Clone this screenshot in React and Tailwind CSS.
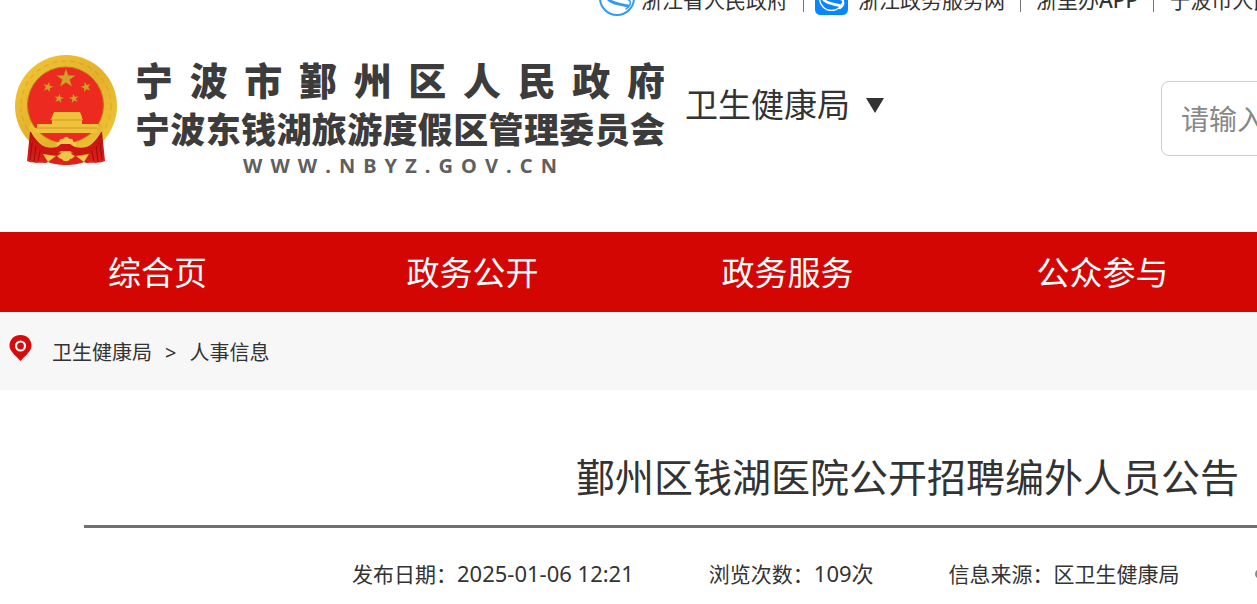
const navItems = ["综合页", "政务公开", "政务服务", "公众参与"];

const meta = [
    { label: "发布日期：", value: "2025-01-06 12:21", numeric: true },
    { label: "浏览次数：", value: "109次", numeric: true },
    { label: "信息来源：", value: "区卫生健康局" },
];

const star = "M0,-10 L2.3,-3.2 L9.5,-3.1 L3.8,1.2 L5.9,8.1 L0,4 L-5.9,8.1 L-3.8,1.2 L-9.5,-3.1 L-2.3,-3.2 Z";

function Emblem() {
    return (
        <svg viewBox="0 0 104 112" className="h-28 w-[104px] shrink-0" aria-label="国徽" role="img">
            <defs>
                <linearGradient id="gold" x1="0" y1="0" x2="1" y2="1">
                    <stop offset="0" stopColor="#f3c838" />
                    <stop offset="0.5" stopColor="#e3b02a" />
                    <stop offset="1" stopColor="#f3cb38" />
                </linearGradient>
                <linearGradient id="drape" x1="0" y1="0" x2="0" y2="1">
                    <stop offset="0" stopColor="#b80f0d" />
                    <stop offset="1" stopColor="#e3231c" />
                </linearGradient>
            </defs>
            {/* ring and red field */}
            <circle cx="52" cy="51" r="51" fill="url(#gold)" />
            <circle cx="52" cy="51" r="45" fill="none" stroke="#cf981c" strokeWidth="1.500" strokeDasharray="5 4" opacity="0.4" />
            {/* drapes */}
            <path d="M16 77L13 106c4 2 7 1 9 2 6-1 9 1 12-1 5 2 10 3 18 3s13-1 18-3c3 2 6 0 12 1 2-1 5 0 9-2L88 77z" fill="url(#drape)" />
            <path d="M18 88l-2 17M22 90l-2 17M27 93l-3 13M86 88l2 17M82 90l2 17M77 93l3 13" stroke="#9c0b0a" strokeWidth="1" fill="none" />
            <path d="M15 72c5 16 20 26 37 26s32-10 37-26l-6-8H21z" fill="url(#gold)" />
            <circle cx="51.500" cy="50" r="38" fill="#ec2a20" stroke="#b9791b" strokeWidth="1" />
            <g fill="#d5a027" stroke="#a8660f" strokeWidth="0.400">
                <path d={star} transform="translate(52 23.500)" />
                <path d={star} transform="translate(34 32) rotate(15) scale(0.550)" />
                <path d={star} transform="translate(72 32) rotate(-15) scale(0.550)" />
                <path d={star} transform="translate(45 43.500) rotate(10) scale(0.500)" />
                <path d={star} transform="translate(60 43.500) rotate(-10) scale(0.500)" />
            </g>
            {/* gate tower */}
            <g fill="#f0c23c">
                <path d="M40 57h26l2 5H38z" />
                <path d="M39 61h28l2 4H36zM38 65h30v5H38z" />
                <path d="M23 69h61v4h-1v5H21v-5h2z" />
            </g>
            <path d="M37 65h32M22 73h61" stroke="#c98d1c" strokeWidth="0.800" />
            {/* knot */}
            <path d="M43 91c-1-3 0-4 2-4 0-3 3-4 4-3 2-3 5-3 6 0 2-1 5 0 4 3 3 0 4 2 2 4l-4 3H48z" fill="#f2cb4a" />
            <path d="M17 82c8 10 17 12 26 10l4-3h9l5 3c9 2 18 0 26-10-4 13-14 18-24 18l-7-4h-9l-7 4c-10 0-19-5-23-18z" fill="#d01612" />
            <path d="M29 99l13 2-8 6zM75 99l-13 2 8 6z" fill="#eec848" />
            <path d="M43 101c3-1 4-4 7-4h4c3 0 4 3 7 4-2 2-3 3-5 3-1 3-7 3-8 0-2 0-3-1-5-3z" fill="#edc548" />
        </svg>
    );
}

function GovMark({ className, bg, fg }) {
    return (
        <svg viewBox="0 0 36 36" className={className} aria-hidden="true">
            {bg && <rect width="36" height="36" rx="6" fill={bg} />}
            <g fill="none" stroke={fg} strokeLinecap="round">
                <circle cx="18" cy="18" r={bg ? 13 : 17} strokeWidth={bg ? 1.5 : 2} />
                <path d="M8 17c2 6 12 7 21 9" strokeWidth="3" />
                <path d="M9 13c7 5 17 3 22 8 1 3-1 6-4 8" strokeWidth="1.500" />
            </g>
        </svg>
    );
}

function TopLinks() {
    return (
        <div className="flex h-4 items-end overflow-hidden pl-[599px] text-[21px] leading-8">
            <div className="flex shrink-0 items-end">
                <a href="#" className="flex items-end gap-[6px]">
                    <GovMark className="size-9" fg="#2f9bf5" />
                    浙江省人民政府
                </a>
                <span className="mb-1 ml-[15px] mr-[11px] h-6 w-px bg-neutral-500" />
                <a href="#" className="flex items-end gap-[10px]">
                    <GovMark className="mb-px size-[33px]" bg="#0a86fb" fg="#ffffff" />
                    浙江政务服务网
                </a>
                <span className="mx-[15px] mb-1 h-6 w-px bg-neutral-500" />
                <a href="#">
                    浙里办<span className="font-medium">APP</span>
                </a>
                <span className="mx-[15px] mb-1 h-6 w-px bg-neutral-500" />
                <a href="#">宁波市人民政府</a>
            </div>
        </div>
    );
}

function Header() {
    return (
        <header className="flex items-start pb-[54px] pl-[14px] pt-[39px]">
            <Emblem />
            <a href="#" className="ml-[17px] block w-[530px] shrink-0 text-[#3c3c3c]">
                <span className="block text-[38px] font-black leading-[50px] [text-align-last:justify]">
                    宁波市鄞州区人民政府
                </span>
                <span className="block text-[35px] font-black leading-[49px] [text-align-last:justify]">
                    宁波东钱湖旅游度假区管理委员会
                </span>
                <span className="mx-auto flex w-[314px] justify-between text-xl font-bold leading-6 text-[#606060]">
                    {[..."WWW.NBYZ.GOV.CN"].map((letter, i) => (
                        <span key={i}>{letter}</span>
                    ))}
                </span>
            </a>
            <button type="button" className="ml-5 mt-6 flex shrink-0 items-center gap-4 text-[33px] leading-[52px]">
                卫生健康局
                <svg viewBox="0 0 18 15" className="h-[15px] w-[18px]" aria-hidden="true">
                    <path d="M0 0h18L9 15z" fill="#333" />
                </svg>
            </button>
            <input
                type="text"
                aria-label="搜索"
                placeholder="请输入关键字"
                className="ml-[277px] mt-[26px] h-[75px] w-[420px] shrink-0 rounded-lg border border-[#ccc] px-[19px] text-[28px] placeholder:text-[#888]"
            />
        </header>
    );
}

export default function App() {
    return (
        <div className="min-h-screen overflow-hidden whitespace-nowrap bg-white font-['Noto_Sans','Noto_Sans_CJK_SC',sans-serif] text-[#333]">
            <TopLinks />
            <Header />

            <nav className="flex h-20 items-center bg-[#d40603] pt-0.5 text-[33px] text-white">
                {navItems.map((item) => (
                    <a key={item} href="#" className="w-[315px] shrink-0 text-center">
                        {item}
                    </a>
                ))}
            </nav>

            <div className="flex h-[78px] items-center bg-[#f7f7f7] pl-[9px] pt-1 text-[20px]">
                <svg viewBox="0 0 23 26" className="mb-2.5 mr-5 h-[26px] w-[23px]" aria-hidden="true">
                    <path d="M11.500 0C5 0 .5 4.700.5 10.500.5 16 6 20 11.500 26 17 20 22.500 16 22.500 10.500 22.500 4.700 18 0 11.500 0z" fill="#d60b0b" />
                    <circle cx="11.500" cy="11" r="4.500" fill="#d60b0b" stroke="#fff" strokeWidth="2.200" />
                </svg>
                <a href="#">卫生健康局</a>
                <span className="mx-[13px]">&gt;</span>
                <a href="#">人事信息</a>
            </div>

            <main className="pl-[84px] pt-[57px]">
                <h1 className="border-b-[3px] border-[#707070] pb-[18px] pl-[492px] text-[39px] leading-[60px]">
                    鄞州区钱湖医院公开招聘编外人员公告
                </h1>
                <div className="flex items-center gap-[75px] pl-[268px] pt-[29px] text-[21px] leading-8">
                    {meta.map(({ label, value, numeric }) => (
                        <span key={label} className="shrink-0">
                            {label}
                            <span className={numeric ? "text-[22px]" : ""}>{value}</span>
                        </span>
                    ))}
                    <svg viewBox="0 0 24 24" className="size-6 shrink-0" fill="#888" aria-hidden="true">
                        <circle cx="5" cy="12" r="5" />
                        <circle cx="18" cy="5" r="4" />
                        <circle cx="18" cy="19" r="4" />
                    </svg>
                </div>
            </main>
        </div>
    );
}
